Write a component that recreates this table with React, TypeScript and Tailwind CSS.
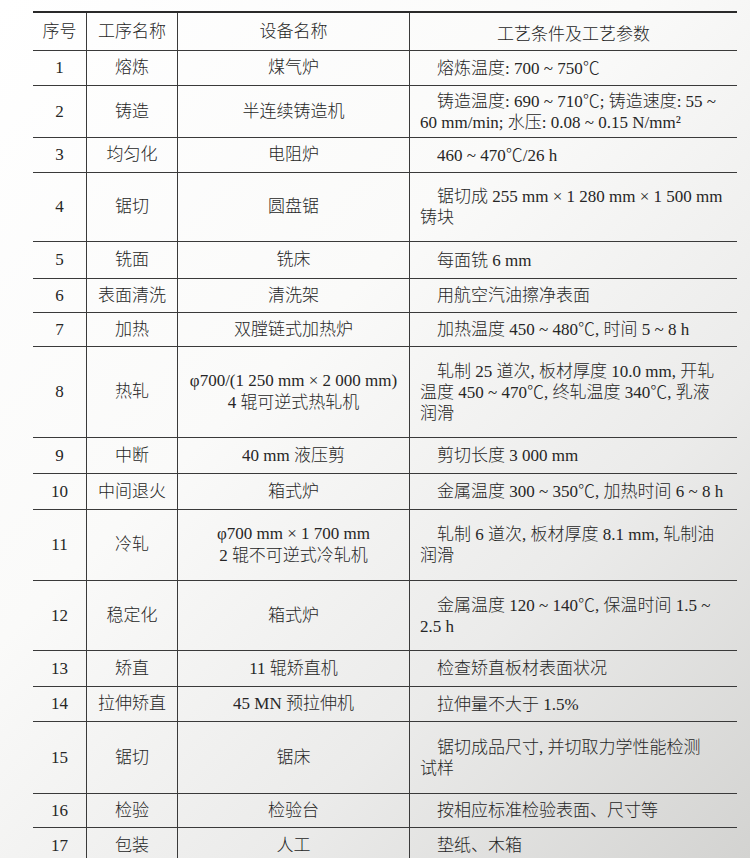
type Row = {
  no: string
  step: string
  equip: string[]
  params: string[]
  h: string
}

const rows: Row[] = [
  { no: '1', step: '熔炼', equip: ['煤气炉'], params: ['熔炼温度: 700 ~ 750℃'], h: 'h-[35px]' },
  {
    no: '2',
    step: '铸造',
    equip: ['半连续铸造机'],
    params: ['铸造温度: 690 ~ 710℃; 铸造速度: 55 ~', '60 mm/min; 水压: 0.08 ~ 0.15 N/mm²'],
    h: 'h-[52px]',
  },
  { no: '3', step: '均匀化', equip: ['电阻炉'], params: ['460 ~ 470℃/26 h'], h: 'h-[35px]' },
  {
    no: '4',
    step: '锯切',
    equip: ['圆盘锯'],
    params: ['锯切成 255 mm × 1 280 mm × 1 500 mm', '铸块'],
    h: 'h-[69px]',
  },
  { no: '5', step: '铣面', equip: ['铣床'], params: ['每面铣 6 mm'], h: 'h-[37px]' },
  { no: '6', step: '表面清洗', equip: ['清洗架'], params: ['用航空汽油擦净表面'], h: 'h-[34px]' },
  { no: '7', step: '加热', equip: ['双膛链式加热炉'], params: ['加热温度 450 ~ 480℃, 时间 5 ~ 8 h'], h: 'h-[34px]' },
  {
    no: '8',
    step: '热轧',
    equip: ['φ700/(1 250 mm × 2 000 mm)', '4 辊可逆式热轧机'],
    params: ['轧制 25 道次, 板材厚度 10.0 mm, 开轧', '温度 450 ~ 470℃, 终轧温度 340℃, 乳液', '润滑'],
    h: 'h-[91px]',
  },
  { no: '9', step: '中断', equip: ['40 mm 液压剪'], params: ['剪切长度 3 000 mm'], h: 'h-[36px]' },
  { no: '10', step: '中间退火', equip: ['箱式炉'], params: ['金属温度 300 ~ 350℃, 加热时间 6 ~ 8 h'], h: 'h-[36px]' },
  {
    no: '11',
    step: '冷轧',
    equip: ['φ700 mm × 1 700 mm', '2 辊不可逆式冷轧机'],
    params: ['轧制 6 道次, 板材厚度 8.1 mm, 轧制油', '润滑'],
    h: 'h-[71px]',
  },
  {
    no: '12',
    step: '稳定化',
    equip: ['箱式炉'],
    params: ['金属温度 120 ~ 140℃, 保温时间 1.5 ~', '2.5 h'],
    h: 'h-[70px]',
  },
  { no: '13', step: '矫直', equip: ['11 辊矫直机'], params: ['检查矫直板材表面状况'], h: 'h-[36px]' },
  { no: '14', step: '拉伸矫直', equip: ['45 MN 预拉伸机'], params: ['拉伸量不大于 1.5%'], h: 'h-[35px]' },
  {
    no: '15',
    step: '锯切',
    equip: ['锯床'],
    params: ['锯切成品尺寸, 并切取力学性能检测', '试样'],
    h: 'h-[72px]',
  },
  { no: '16', step: '检验', equip: ['检验台'], params: ['按相应标准检验表面、尺寸等'], h: 'h-[34px]' },
  { no: '17', step: '包装', equip: ['人工'], params: ['垫纸、木箱'], h: 'h-[36px]' },
]

export default function App() {
  return (
    <div
      className="w-[750px] h-[858px] overflow-hidden pl-[33px] pt-[11px] text-[#262626] text-[17px] font-light bg-[linear-gradient(135deg,#ffffff_0%,#fafaf9_40%,#ebebea_70%,#d3d3d1_100%)]"
      style={{ fontFamily: '"Liberation Serif", "Noto Sans CJK SC", serif' }}
    >
      <div className="w-[704px] border-t-2 border-[#2a2a2a]">
        {/* header */}
        <div className="flex h-[38px] border-b border-[#3a3a3a]">
          <div className="w-[54px] shrink-0 border-r border-[#3a3a3a] flex items-center justify-center">序号</div>
          <div className="w-[91px] shrink-0 border-r border-[#3a3a3a] flex items-center justify-center">工序名称</div>
          <div className="w-[232px] shrink-0 border-r border-[#3a3a3a] flex items-center justify-center">设备名称</div>
          <div className="flex-1 min-w-0 flex items-center justify-center pt-[6px]">工艺条件及工艺参数</div>
        </div>

        {rows.map(r => (
          <div key={r.no} className={`flex ${r.h} border-b border-[#3a3a3a]`}>
            <div className="w-[54px] shrink-0 border-r border-[#3a3a3a] flex items-center justify-center">{r.no}</div>
            <div className="w-[91px] shrink-0 border-r border-[#3a3a3a] flex items-center justify-center">{r.step}</div>
            <div className="w-[232px] shrink-0 border-r border-[#3a3a3a] flex flex-col items-center justify-center leading-[22px] whitespace-nowrap">
              {r.equip.map((t, i) => (
                <span key={i}>{t}</span>
              ))}
            </div>
            <div className="flex-1 min-w-0 flex flex-col justify-center pl-[10px] leading-[21px] whitespace-nowrap">
              {r.params.map((t, i) => (
                <span key={i} className={i === 0 ? 'pl-[17px]' : ''}>
                  {t}
                </span>
              ))}
            </div>
          </div>
        ))}
      </div>
    </div>
  )
}
